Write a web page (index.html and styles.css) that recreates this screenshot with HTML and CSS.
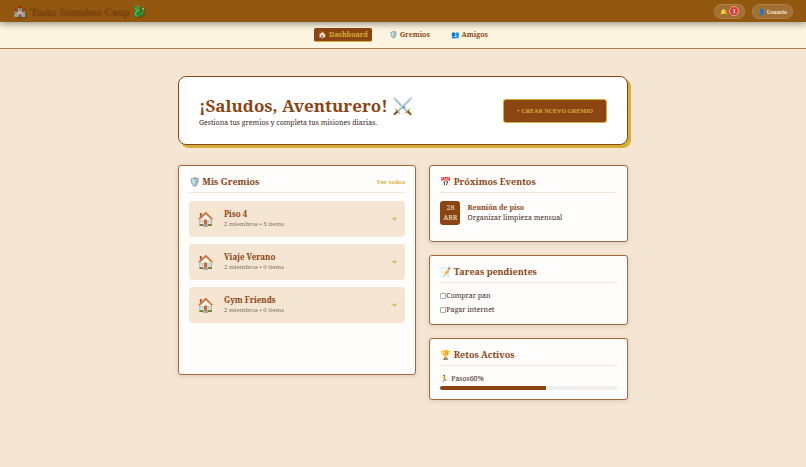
FILE: index.html
```html
<!DOCTYPE html>
<html lang="es">
<head>
    <meta charset="UTF-8">
    <meta name="viewport" content="width=device-width, initial-scale=1.0">
    <title>Tasks Seamless Coop</title>
    <link rel="stylesheet" href="styles.css">
</head>
<body>
    <header class="topbar">
        <div class="logo">🏰 Tasks Seamless Coop 🐉</div>
        <div class="user-actions">
            <button class="pill" type="button" aria-label="Notificaciones">🔔 <span class="badge">1</span></button>
            <button class="pill" type="button">👤 Usuario</button>
        </div>
    </header>

    <nav class="main-nav">
        <a href="#dashboard" class="nav-link active">🏠 Dashboard</a>
        <a href="#gremios" class="nav-link">🛡️ Gremios</a>
        <a href="#amigos" class="nav-link">👥 Amigos</a>
    </nav>

    <main class="container">
        <section class="welcome">
            <div class="welcome-text">
                <h1>¡Saludos, Aventurero! ⚔️</h1>
                <p>Gestiona tus gremios y completa tus misiones diarias.</p>
            </div>
            <button class="create-btn" type="button">+ CREAR NUEVO GREMIO</button>
        </section>

        <div class="dashboard-grid">
            <section class="card guilds">
                <div class="card-header">
                    <h2>🛡️ Mis Gremios</h2>
                    <a href="#gremios" class="see-all">Ver todos</a>
                </div>
                <div class="guild-list">
                    <a href="#piso" class="guild">
                        <span class="guild-icon">🏠</span>
                        <div class="guild-info">
                            <h3>Piso 4</h3>
                            <p>2 miembros • 5 items</p>
                        </div>
                        <span class="arrow">➜</span>
                    </a>
                    <a href="#viaje" class="guild">
                        <span class="guild-icon">🏠</span>
                        <div class="guild-info">
                            <h3>Viaje Verano</h3>
                            <p>2 miembros • 0 items</p>
                        </div>
                        <span class="arrow">➜</span>
                    </a>
                    <a href="#gym" class="guild">
                        <span class="guild-icon">🏠</span>
                        <div class="guild-info">
                            <h3>Gym Friends</h3>
                            <p>2 miembros • 0 items</p>
                        </div>
                        <span class="arrow">➜</span>
                    </a>
                </div>
            </section>

            <div class="side-column">
                <section class="card events">
                    <div class="card-header">
                        <h2>📅 Próximos Eventos</h2>
                    </div>
                    <div class="event">
                        <div class="event-date">
                            <span>28</span>
                            <span>ABR</span>
                        </div>
                        <div class="event-info">
                            <h4>Reunión de piso</h4>
                            <p>Organizar limpieza mensual</p>
                        </div>
                    </div>
                </section>

                <section class="card">
                    <div class="card-header">
                        <h2>📝 Tareas pendientes</h2>
                    </div>
                    <ul class="task-list">
                        <li><input type="checkbox" id="task-pan"><label for="task-pan">Comprar pan</label></li>
                        <li><input type="checkbox" id="task-internet"><label for="task-internet">Pagar internet</label></li>
                    </ul>
                </section>

                <section class="card">
                    <div class="card-header">
                        <h2>🏆 Retos Activos</h2>
                    </div>
                    <div class="challenge">
                        <p><span>🏃 Pasos</span><span>60%</span></p>
                        <div class="progress">
                            <div class="progress-fill" style="width: 60%"></div>
                        </div>
                    </div>
                </section>
            </div>
        </div>
    </main>
</body>
</html>
```

FILE: styles.css
```css
:root {
    --wood: #8b4513;
    --bar: #935810;
    --gold: #d4af37;
    --sand: #f5e6d3;
    --cream: #fdf5e0;
    --ink: #3e2723;
}

* {
    margin: 0;
    padding: 0;
    box-sizing: border-box;
}

body {
    font-family: 'Noto Serif', 'Liberation Serif', serif;
    font-size: 7px;
    line-height: 10px;
    background: var(--sand);
    color: var(--ink);
    min-height: 100vh;
}

a {
    text-decoration: none;
}

button {
    font-family: 'Liberation Serif', serif;
    cursor: pointer;
}

/* Header */
.topbar {
    position: relative;
    display: flex;
    justify-content: space-between;
    align-items: center;
    height: 22px;
    padding: 0 13px;
    background: var(--bar);
    box-shadow: 0 2px 7px rgba(0, 0, 0, 0.4);
}

.logo {
    font-family: 'Liberation Serif', serif;
    font-size: 11px;
    font-weight: bold;
    color: var(--wood);
    text-shadow: 1px 1px 1px rgba(0, 0, 0, 0.3);
}

.user-actions {
    display: flex;
    gap: 7px;
}

.pill {
    display: flex;
    align-items: center;
    gap: 2px;
    height: 15px;
    padding: 0 5px;
    border: 1px solid rgba(255, 255, 255, 0.1);
    border-radius: 8px;
    background: rgba(255, 255, 255, 0.15);
    color: var(--sand);
    font-size: 6px;
    font-weight: bold;
}

.badge {
    display: flex;
    align-items: center;
    justify-content: center;
    width: 10px;
    height: 10px;
    border: 1px solid #f4a090;
    border-radius: 50%;
    background: #e53935;
    color: #fff;
}

/* Navigation */
.main-nav {
    display: flex;
    justify-content: center;
    gap: 13px;
    padding: 6px 0;
    background: var(--cream);
    border-bottom: 1px solid #b07a4c;
}

.nav-link {
    padding: 1px 3px;
    border: 1px solid transparent;
    border-radius: 2px;
    color: var(--wood);
    font-weight: bold;
}

.nav-link.active {
    background: var(--wood);
    border-bottom-color: var(--gold);
    color: var(--gold);
}

/* Content */
.container {
    max-width: 450px;
    margin: 0 auto;
    padding: 27px 0;
}

.welcome {
    display: flex;
    justify-content: space-between;
    align-items: center;
    margin-bottom: 20px;
    padding: 16px 20px;
    background: #fff;
    border: 1px solid var(--wood);
    border-radius: 8px;
    box-shadow: 3px 3px 0 var(--gold);
}

.welcome h1 {
    font-size: 17px;
    line-height: 25px;
    color: var(--wood);
}

.create-btn {
    padding: 6px 13px;
    border: 1px solid var(--gold);
    border-radius: 3px;
    background: var(--wood);
    color: var(--gold);
    font-size: 6px;
    line-height: 10px;
    font-weight: bold;
}

.dashboard-grid {
    display: grid;
    grid-template-columns: 1.2fr 1fr;
    align-items: start;
    gap: 13px;
}

.side-column {
    display: flex;
    flex-direction: column;
    gap: 13px;
}

.card {
    padding: 10px 10px 9px;
    background: #fffdfb;
    border: 1px solid #a5673f;
    border-radius: 3px;
    box-shadow: 0 1px 5px rgba(0, 0, 0, 0.12);
}

.card-header {
    display: flex;
    justify-content: space-between;
    align-items: center;
    margin-bottom: 8px;
    padding-bottom: 4px;
    border-bottom: 1px solid var(--sand);
}

.card-header h2 {
    font-size: 9px;
    line-height: 12px;
    color: var(--wood);
}

.see-all {
    color: var(--gold);
    font-size: 6px;
    font-weight: bold;
}

/* Guilds */
.guilds {
    min-height: 210px;
}

.guild-list {
    display: flex;
    flex-direction: column;
    gap: 7px;
}

.guild {
    display: flex;
    align-items: center;
    gap: 10px;
    padding: 8px;
    border-radius: 4px;
    background: var(--sand);
}

.guild-icon {
    font-size: 14px;
    line-height: 20px;
}

.guild-info {
    flex: 1;
}

.guild-info h3 {
    font-size: 8px;
    color: var(--wood);
}

.guild-info p {
    color: #7d716a;
    font-size: 6px;
}

.arrow {
    color: var(--gold);
}

/* Events */
.events {
    min-height: 77px;
}

.event {
    display: flex;
    align-items: flex-start;
    gap: 7px;
}

.event-date {
    display: flex;
    flex-direction: column;
    padding: 2px 3px;
    border-radius: 3px;
    background: var(--wood);
    color: var(--sand);
    text-align: center;
}

.event-info {
    padding-top: 2px;
}

.event-info h4 {
    color: var(--wood);
}

/* Tasks */
.task-list {
    display: flex;
    flex-direction: column;
    gap: 4px;
    list-style: none;
}

.task-list li {
    display: flex;
    align-items: center;
}

.task-list input {
    appearance: none;
    width: 6px;
    height: 6px;
    border: 1px solid #aaa;
    border-radius: 1px;
    background: #fff;
}

.task-list input:checked {
    background: var(--wood);
}

/* Challenges */
.challenge p {
    display: flex;
}

.progress {
    height: 4px;
    margin-top: 2px;
    border-radius: 2px;
    background: #eee;
    overflow: hidden;
}

.progress-fill {
    height: 100%;
    background: var(--wood);
}
```
